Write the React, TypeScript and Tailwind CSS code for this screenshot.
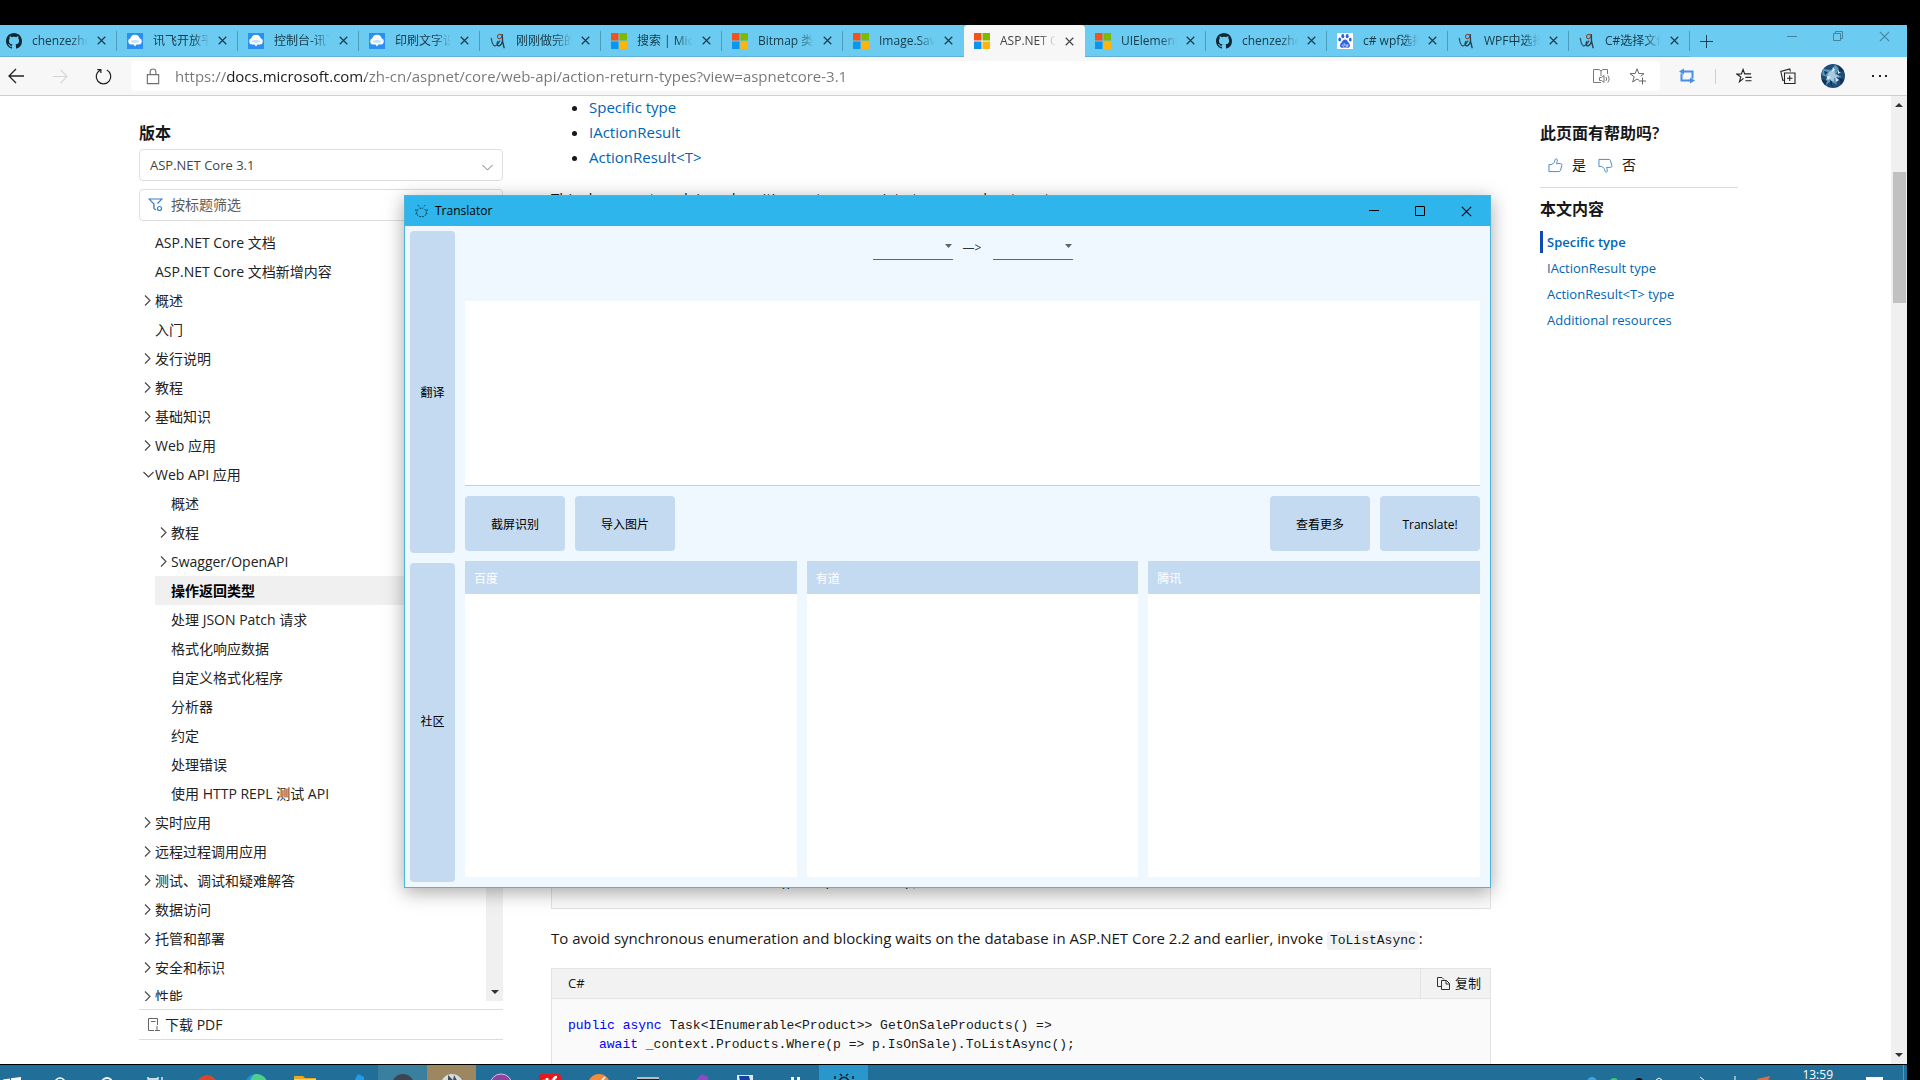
import React from "react";

type Favicon = "github" | "cloud" | "csdn" | "ms" | "baidu";

const TABS: { icon: Favicon; title: string; active?: boolean }[] = [
  { icon: "github", title: "chenzezhe" },
  { icon: "cloud", title: "讯飞开放平" },
  { icon: "cloud", title: "控制台-讯飞" },
  { icon: "cloud", title: "印刷文字识" },
  { icon: "csdn", title: "刚刚做完的" },
  { icon: "ms", title: "搜索 | Micr" },
  { icon: "ms", title: "Bitmap 类" },
  { icon: "ms", title: "Image.Sav" },
  { icon: "ms", title: "ASP.NET C", active: true },
  { icon: "ms", title: "UIElement" },
  { icon: "github", title: "chenzezhe" },
  { icon: "baidu", title: "c# wpf选择" },
  { icon: "csdn", title: "WPF中选择" },
  { icon: "csdn", title: "C#选择文件" },
];

type Node = { label: string; level: 1 | 2; mark?: "closed" | "open"; current?: boolean };

const TOC: Node[] = [
  { label: "ASP.NET Core 文档", level: 1 },
  { label: "ASP.NET Core 文档新增内容", level: 1 },
  { label: "概述", level: 1, mark: "closed" },
  { label: "入门", level: 1 },
  { label: "发行说明", level: 1, mark: "closed" },
  { label: "教程", level: 1, mark: "closed" },
  { label: "基础知识", level: 1, mark: "closed" },
  { label: "Web 应用", level: 1, mark: "closed" },
  { label: "Web API 应用", level: 1, mark: "open" },
  { label: "概述", level: 2 },
  { label: "教程", level: 2, mark: "closed" },
  { label: "Swagger/OpenAPI", level: 2, mark: "closed" },
  { label: "操作返回类型", level: 2, current: true },
  { label: "处理 JSON Patch 请求", level: 2 },
  { label: "格式化响应数据", level: 2 },
  { label: "自定义格式化程序", level: 2 },
  { label: "分析器", level: 2 },
  { label: "约定", level: 2 },
  { label: "处理错误", level: 2 },
  { label: "使用 HTTP REPL 测试 API", level: 2 },
  { label: "实时应用", level: 1, mark: "closed" },
  { label: "远程过程调用应用", level: 1, mark: "closed" },
  { label: "测试、调试和疑难解答", level: 1, mark: "closed" },
  { label: "数据访问", level: 1, mark: "closed" },
  { label: "托管和部署", level: 1, mark: "closed" },
  { label: "安全和标识", level: 1, mark: "closed" },
  { label: "性能", level: 1, mark: "closed" },
];

function Fav({ icon }: { icon: Favicon }) {
  if (icon === "github")
    return (
      <svg viewBox="0 0 16 16" className="size-4 shrink-0 fill-[#0d2733]">
        <path d="M8 0C3.58 0 0 3.58 0 8c0 3.54 2.29 6.53 5.47 7.59.4.07.55-.17.55-.38 0-.19-.01-.82-.01-1.49-2.01.37-2.53-.49-2.69-.94-.09-.23-.48-.94-.82-1.13-.28-.15-.68-.52-.01-.53.63-.01 1.08.58 1.23.82.72 1.21 1.87.87 2.33.66.07-.52.28-.87.51-1.07-1.78-.2-3.64-.89-3.64-3.95 0-.87.31-1.59.82-2.15-.08-.2-.36-1.02.08-2.12 0 0 .67-.21 2.2.82.64-.18 1.32-.27 2-.27s1.36.09 2 .27c1.53-1.04 2.2-.82 2.2-.82.44 1.1.16 1.92.08 2.12.51.56.82 1.27.82 2.15 0 3.07-1.87 3.75-3.65 3.95.29.25.54.73.54 1.48 0 1.07-.01 1.93-.01 2.2 0 .21.15.46.55.38A8.01 8.01 0 0 0 16 8c0-4.42-3.58-8-8-8z" />
      </svg>
    );
  if (icon === "cloud")
    return (
      <svg viewBox="0 0 16 16" className="size-4 shrink-0">
        <rect width="16" height="16" fill="#2b8ff0" />
        <path d="M4 11.600a3.300 3.300 0 0 1-.6-6.400 4.800 4.800 0 0 1 9.200 0 3.300 3.300 0 0 1-.6 6.400H9.500L8 13.600l-1.500-2z" fill="#fff" />
        <path d="M5 7.500v1.800M7 7v2.800M9 7v2.800M11 7.500v1.800" stroke="#6bb2f5" strokeWidth=".8" />
      </svg>
    );
  if (icon === "csdn")
    return (
      <svg viewBox="0 0 16 16" className="size-4 shrink-0" fill="none" strokeLinecap="round">
        <path d="M1.300 5.300c.4 3.600 1.500 6.700 3.300 7.700 2-.4 3.800-2.400 5.200-5" stroke="#31576b" strokeWidth="1.300" />
        <path d="M12 2.200C9.500.4 6.800 2 7.600 4.400c.8 2.200 4.200 1 4.600-1.400" stroke="#8a4a40" strokeWidth="1.200" />
        <path d="M12.300 1.700c-.3 4.300.4 9 1.800 13M8 8.500c-1.400 2-1 5 1.200 4.300 1.700-.6 2.900-2.400 3.300-4.600" stroke="#26434f" strokeWidth="1.400" />
      </svg>
    );
  if (icon === "ms")
    return (
      <svg viewBox="0 0 16 16" className="size-4 shrink-0">
        <path d="M0 0h7.500v7.500H0z" fill="#f2531b" />
        <path d="M8.500 0H16v7.500H8.500z" fill="#7eb900" />
        <path d="M0 8.500h7.500V16H0z" fill="#0a95ef" />
        <path d="M8.500 8.500H16V16H8.500z" fill="#fdb50c" />
      </svg>
    );
  return (
    <svg viewBox="0 0 16 16" className="size-4 shrink-0">
      <rect width="16" height="16" fill="#fff" />
      <g fill="#2f63de">
        <ellipse cx="5.800" cy="3.200" rx="1.500" ry="2.100" />
        <ellipse cx="10.200" cy="3.200" rx="1.500" ry="2.100" />
        <ellipse cx="2.700" cy="6.500" rx="1.400" ry="1.900" />
        <ellipse cx="13.300" cy="6.700" rx="1.400" ry="1.900" />
        <path d="M8 6.600c2 0 2.300 1.900 3.700 3.100 1.900 1.700 1.700 5-1.200 5.100-1 0-1.600-.2-2.500-.2s-1.500.2-2.500.2c-2.900-.1-3.100-3.400-1.200-5.100C5.700 8.500 6 6.600 8 6.600z" />
      </g>
      <path d="M5.600 11.500a1 1 0 1 0 1.600 1.400v-3M9 11v2.300h1.800V11" fill="none" stroke="#fff" strokeWidth=".7" />
    </svg>
  );
}

function Cross({ className }: { className: string }) {
  return (
    <svg viewBox="0 0 10 10" className={className} fill="none" stroke="currentColor">
      <path d="M.8.8l8.400 8.400M9.200.8L.8 9.200" />
    </svg>
  );
}

function TabStrip() {
  return (
    <div className="flex h-8 shrink-0 items-stretch justify-between overflow-hidden bg-[#6bcbf0] text-[#173a49]">
      <div role="tablist" className="-ml-1 flex">
        {TABS.map((t, i) => (
          <div
            key={i}
            role="tab"
            aria-selected={!!t.active}
            className={
              t.active
                ? "flex w-[121px] items-center rounded-t bg-[#f7f7f7] pl-[10px] text-[#444]"
                : "flex w-[121px] items-center border-b border-[#5fb1d3] pl-[10px]"
            }
          >
            <Fav icon={t.icon} />
            <span className="ml-[10px] w-[56px] overflow-hidden text-xs whitespace-nowrap [mask-image:linear-gradient(to_right,black_70%,transparent)]">
              {t.title}
            </span>
            <button aria-label="关闭标签页" className="ml-[5px] grid size-4 place-items-center">
              <Cross className="size-[9px] stroke-[1.300]" />
            </button>
            <i className={t.active || i === 7 ? "ml-auto" : "ml-auto h-5 w-px bg-[#4a9cbd]"} />
          </div>
        ))}
        <button aria-label="新建标签页" className="ml-1 grid w-6 place-items-center">
          <svg viewBox="0 0 14 14" className="size-[13px]" fill="none" stroke="currentColor">
            <path d="M7 0v14M0 7h14" />
          </svg>
        </button>
      </div>
      <div className="flex h-[22px] text-[#44849f]">
        <button aria-label="最小化" className="grid w-[46px] place-items-center">
          <svg viewBox="0 0 10 10" className="size-[10px]" stroke="currentColor">
            <path d="M0 5.500h10" />
          </svg>
        </button>
        <button aria-label="还原" className="grid w-[46px] place-items-center">
          <svg viewBox="0 0 10 10" className="size-[10px]" fill="none" stroke="currentColor">
            <path d="M.5 2.500h7v7h-7zM2.500 2.500v-2h7v7h-2" />
          </svg>
        </button>
        <button aria-label="关闭" className="grid w-[46px] place-items-center">
          <Cross className="size-[11px]" />
        </button>
      </div>
    </div>
  );
}

function Toolbar() {
  return (
    <div className="flex h-[39px] shrink-0 items-center border-b border-[#cfcfcf] bg-[#f7f7f7] text-[#222]">
      <div className="flex flex-none">
        <button aria-label="返回" className="grid w-8 place-items-center">
          <svg viewBox="0 0 16 16" className="size-4" fill="none" stroke="currentColor" strokeWidth="1.300">
            <path d="M16 8H1M8 1L1 8l7 7" />
          </svg>
        </button>
        <button aria-label="前进" className="ml-3 grid w-8 place-items-center text-[#d5d5d5]">
          <svg viewBox="0 0 16 16" className="size-[15px]" fill="none" stroke="currentColor" strokeWidth="1.200">
            <path d="M0 8h15M8 1l7 7-7 7" />
          </svg>
        </button>
        <button aria-label="刷新" className="ml-[11px] grid w-8 place-items-center">
          <svg viewBox="0 0 18 18" className="size-[17px]" fill="none" stroke="currentColor" strokeWidth="1.300">
            <path d="M12.500 2.200a7.700 7.700 0 1 1-7.200.1M2.500 1.700h3.700v3.700" />
          </svg>
        </button>
      </div>
      <div className="ml-3 flex h-[30px] flex-1 items-center rounded bg-white pr-[5px] pl-[14px]">
        <svg viewBox="0 0 16 18" className="h-[17px] w-4 text-[#707070]" fill="none" stroke="currentColor" strokeWidth="1.200">
          <path d="M2 7h12v9.500H2zM5 7V4a3 3 0 0 1 6 0v3" />
        </svg>
        <input
          aria-label="地址栏"
          readOnly
          value="https://docs.microsoft.com/zh-cn/aspnet/core/web-api/action-return-types?view=aspnetcore-3.1"
          className="ml-[14px] min-w-0 flex-1 bg-[linear-gradient(to_right,#767676_52px,#1a1a1a_52px,#1a1a1a_190px,#767676_190px)] bg-clip-text text-[15px] text-transparent outline-none"
        />
        <button aria-label="大声朗读" className="grid w-9 place-items-center text-[#777]">
          <svg viewBox="0 0 17 17" className="size-[17px]" fill="none" stroke="currentColor">
            <path d="M8 14.500H.5V1.500H6l2 1.500 2-1.500h4.500V6M8 3v5M6.500 9.500h2L11 7.500v7L8.500 12.500h-2zM12.800 9c1 1.200 1 2.800 0 4M14.800 7.500c1.700 2 1.700 5 0 7" />
          </svg>
        </button>
        <button aria-label="添加到收藏夹" className="grid w-9 place-items-center text-[#666]">
          <svg viewBox="0 0 17 17" className="size-[17px]" fill="none" stroke="currentColor">
            <path d="M10 12.200L8 11l-4.300 3 1.500-5.300L1 5.700l5.200-.2L8 .8l1.800 4.700 5.200.2-3.300 2.600M13.500 9.500v7M10 13h7" />
          </svg>
        </button>
      </div>
      <div className="flex flex-none items-center">
        <button aria-label="扩展" className="ml-[19px] grid w-4 place-items-center text-[#4590e6]">
          <svg viewBox="0 0 16 16" className="size-4" fill="none" stroke="currentColor" strokeWidth="2">
            <path d="M2.500 5.500v7H10M13.500 10.500v-7H6" />
            <path d="M2.500 3.500h4M13.500 12.500h-4" />
            <path d="M5 .5L0 3.500l5 3zM11 9.500l5 3-5 3z" fill="currentColor" stroke="none" />
          </svg>
        </button>
        <i className="ml-5 h-[15px] w-px bg-[#d0d0d0]" />
        <button aria-label="收藏夹" className="ml-5 grid w-4 place-items-center">
          <svg viewBox="0 0 17 16" className="size-4" fill="none" stroke="currentColor" strokeWidth="1.200">
            <path d="M8 10.500l-4.300 3.500 1.400-5L1 6l4.800-.2L7.500 1l1.700 4.800H16M10 9.500h6.500M10 13h6.500" />
          </svg>
        </button>
        <button aria-label="集锦" className="ml-7 grid w-4 place-items-center">
          <svg viewBox="0 0 16 16" className="size-4" fill="none" stroke="currentColor" strokeWidth="1.100">
            <path d="M4.500 5h10.500v10.500H4.500zM9.700 7.500v5.500M7 10.200h5.500M4.500 12L2.800 12.300.8 3.500l9-2.600.6 2.600" />
          </svg>
        </button>
        <button aria-label="个人资料" className="ml-[25px] grid size-6 place-items-center overflow-hidden rounded-full">
          <svg viewBox="0 0 24 24" className="size-6">
            <rect width="24" height="24" fill="#1f4d76" />
            <path d="M2 5l8 1 4-5 5 4-4 5 6 3-7 1 2 7-6-4-5 4 1-8-5-2z" fill="#5b98bf" />
            <path d="M8 8l5-3 1 5 4 2-5 2-1 6-3-5-4 1z" fill="#a9cade" />
            <path d="M12 3l2 3-3 2zM6 12l4 1-3 3zM14 13l4 3-3 2zM17 6l3 2-3 2z" fill="#dbe9f1" />
            <path d="M0 15l6 2-2 5zM17 1l6 6-5 1zM18 14l5 1-3 6zM9 16l3 2-2 4zM3 7l4 1-3 3z" fill="#12304f" />
          </svg>
        </button>
        <button aria-label="设置及其他" className="mr-5 ml-[27px] flex w-[15px] justify-between">
          <i className="size-[2px] bg-current" />
          <i className="size-[2px] bg-current" />
          <i className="size-[2px] bg-current" />
        </button>
      </div>
    </div>
  );
}

function TreeMark({ mark }: { mark?: "closed" | "open" }) {
  return (
    <span className="flex w-3 shrink-0 items-center">
      {mark === "closed" && (
        <svg viewBox="0 0 7 11" className="ml-px h-[11px] w-[7px]" fill="none" stroke="#444" strokeWidth="1.100">
          <path d="M1 .5l5 5-5 5" />
        </svg>
      )}
      {mark === "open" && (
        <svg viewBox="0 0 11 7" className="h-[7px] w-[11px]" fill="none" stroke="#444" strokeWidth="1.100">
          <path d="M.5 1l5 5 5-5" />
        </svg>
      )}
    </span>
  );
}

function Sidebar() {
  return (
    <nav className="flex w-[364px] flex-none flex-col pt-[25px] text-sm text-[#222]">
      <label htmlFor="version" className="text-base leading-6 font-semibold text-[#171717]">
        版本
      </label>
      <div className="relative mt-1">
        <select
          id="version"
          className="block h-8 w-full appearance-none rounded-sm border border-[#dedede] bg-white px-[10px] text-[13px] text-[#444]"
        >
          <option>ASP.NET Core 3.1</option>
        </select>
        <svg viewBox="0 0 11 7" className="pointer-events-none absolute top-[15px] right-[10px] h-[7px] w-[11px]" fill="none" stroke="#777">
          <path d="M.5 1l5 5 5-5" />
        </svg>
      </div>
      <div className="mt-2 flex h-8 items-center rounded-sm border border-[#dedede] px-2">
        <svg viewBox="0 0 15 14" className="h-[14px] w-[15px]" fill="none" stroke="#3d7cc4" strokeWidth="1.200">
          <path d="M9.500 5.500L14 1H1l5 5v4.500L8 12M5.800 6v4.500" />
          <circle cx="11.500" cy="10.500" r="2" />
        </svg>
        <input aria-label="按标题筛选" placeholder="按标题筛选" className="ml-2 min-w-0 flex-1 bg-transparent outline-none placeholder:text-[#5c5c5c]" />
      </div>
      <div className="mt-[7px] flex h-[773px]">
        <ul className="min-w-0 flex-1 overflow-hidden">
          {TOC.map((n, i) => (
            <li key={i} className={n.level === 2 ? "pl-4" : ""}>
              <a
                href="#"
                aria-current={n.current ? "page" : undefined}
                className={
                  n.current
                    ? "flex h-[29px] items-center bg-[#f0f0f0] font-semibold text-black"
                    : "ml-1 flex h-[29px] items-center"
                }
              >
                {n.current ? <span className="w-4" /> : <TreeMark mark={n.mark} />}
                {n.label}
              </a>
            </li>
          ))}
        </ul>
        <div className="flex w-[17px] items-end justify-center bg-[#f0f0f0] pb-[7px]">
          <svg viewBox="0 0 8 4" className="h-1 w-2 fill-[#333]">
            <path d="M0 0h8L4 4z" />
          </svg>
        </div>
      </div>
      <a href="#" className="mt-2 flex h-[31px] items-center gap-[5px] border-y border-[#dcdcdc] pl-2">
        <svg viewBox="0 0 13 13" className="size-[13px]" fill="none" stroke="#666">
          <path d="M7 12.500H1.500V.5h9V7M4 3.500h4.500M10 8v4.500M8 12.500h5" />
        </svg>
        下载 PDF
      </a>
    </nav>
  );
}

function CodeKey({ children }: { children: React.ReactNode }) {
  return <span className="text-[#0101fd]">{children}</span>;
}

function Article() {
  return (
    <main className="ml-12 min-w-0 flex-1 text-[15px] leading-[25px] text-[#171717]">
      <ul className="-mt-px list-disc pl-[38px] text-[#0065b3] marker:text-[#171717]">
        <li><a href="#">Specific type</a></li>
        <li><a href="#">IActionResult</a></li>
        <li><a href="#">ActionResult&lt;T&gt;</a></li>
      </ul>
      <p className="mt-4">This document explains when it's most appropriate to use each return type.</p>
      <pre className="mt-4 flex h-[682px] flex-col justify-end border border-[#e3e3e3] bg-[#fafafa] px-4 pb-4 font-['Liberation_Mono',monospace] text-[13px] leading-[19px]">
        <code>{"    _context.Products.Where(p => p.IsOnSale);"}</code>
      </pre>
      <p className="mt-[17px] h-[25px] whitespace-nowrap">
        To avoid synchronous enumeration and blocking waits on the database in ASP.NET Core 2.2 and earlier, invoke{" "}
        <code className="rounded-sm bg-[#f2f2f2] px-[3px] py-[2px] font-['Liberation_Mono',monospace] text-[13px] leading-4">ToListAsync</code>:
      </p>
      <section className="mt-[17px] h-[200px] border border-[#e3e3e3] bg-[#fafafa]">
        <header className="flex h-[30px] items-stretch justify-between border-b border-[#e3e3e3] bg-[#f2f2f2] text-[13px]">
          <span className="flex items-center pl-4">C#</span>
          <button className="flex items-center gap-[5px] border-l border-[#e3e3e3] pr-[9px] pl-4">
            <svg viewBox="0 0 13 13" className="size-[13px]" fill="none" stroke="#333">
              <path d="M4 9.500H.5v-9H5L7 2.500M4.500 3.500h5l3 3v6h-8zM9 3.500V7h3.500" />
            </svg>
            复制
          </button>
        </header>
        <pre className="px-4 pt-[17px] font-['Liberation_Mono',monospace] text-[13px] leading-[19px]">
          <code className="block">
            <CodeKey>public</CodeKey> <CodeKey>async</CodeKey>
            <span>{" Task<IEnumerable<Product>> GetOnSaleProducts() =>"}</span>
          </code>
          <code className="block pl-[31px]">
            <CodeKey>await</CodeKey>
            <span>{" _context.Products.Where(p => p.IsOnSale).ToListAsync();"}</span>
          </code>
        </pre>
      </section>
    </main>
  );
}

function Thumb({ down }: { down?: boolean }) {
  return (
    <svg viewBox="0 0 16 16" className={down ? "size-[15px] -scale-y-100" : "size-[15px]"} fill="none" stroke="#3d86cc">
      <path d="M1 7h2.500C6 6.500 7 4 7.800 1.500c.3-1 2.200-.7 2.200.8 0 1.200-.6 2.500-1 3.700h4.500c1 0 1.600.8 1.300 1.800l-1.600 5.500c-.2.700-.7 1.200-1.500 1.200H1z" />
    </svg>
  );
}

function Aside() {
  return (
    <aside className="ml-[49px] w-[198px] flex-none pt-[25px] text-[#171717]">
      <h2 className="text-base leading-6 font-semibold whitespace-nowrap">此页面有帮助吗?</h2>
      <div className="mt-2 flex h-6 items-center gap-3 pl-2 text-sm">
        <button className="flex items-center gap-[9px]"><Thumb />是</button>
        <button className="flex items-center gap-[9px]"><Thumb down />否</button>
      </div>
      <h2 className="mt-[10px] border-t border-[#dcdcdc] pt-[9px] text-base leading-6 font-semibold">本文内容</h2>
      <ul className="mt-[10px] text-[13px] leading-[22px] text-[#0065b3]">
        <li className="border-l-[3px] border-[#0f4bb0] pl-1 font-semibold"><a href="#">Specific type</a></li>
        <li className="mt-1 pl-[7px]"><a href="#">IActionResult type</a></li>
        <li className="mt-1 pl-[7px]"><a href="#">ActionResult&lt;T&gt; type</a></li>
        <li className="mt-1 pl-[7px]"><a href="#">Additional resources</a></li>
      </ul>
    </aside>
  );
}

function PageScrollbar() {
  return (
    <div className="flex w-4 flex-none flex-col items-center bg-[#f0f0f0] py-[7px]">
      <svg viewBox="0 0 8 4" className="h-1 w-2 fill-[#333]"><path d="M0 4h8L4 0z" /></svg>
      <i className="mt-[65px] h-[131px] w-[13px] bg-[#c1c1c1]" />
      <svg viewBox="0 0 8 4" className="mt-auto h-1 w-2 fill-[#333]"><path d="M0 0h8L4 4z" /></svg>
    </div>
  );
}

function LangSelect({ label }: { label: string }) {
  return (
    <div className="relative h-6 w-20 border-b border-[#5c6670]">
      <select aria-label={label} className="size-full appearance-none bg-transparent">
        <option></option>
      </select>
      <svg viewBox="0 0 7 4" className="pointer-events-none absolute top-2 right-px h-1 w-[7px] fill-[#5c6670]">
        <path d="M0 0h7L3.500 4z" />
      </svg>
    </div>
  );
}

function ActionButton({ children }: { children: React.ReactNode }) {
  return <button className="h-[55px] w-[100px] rounded bg-[#c3daf0] pt-[2px]">{children}</button>;
}

function TranslatorWindow() {
  return (
    <div className="absolute top-[195px] left-[404px] flex h-[693px] w-[1087px] flex-col border border-[#4db4dd] bg-[#eff7ff] text-xs text-black shadow-[0_4px_18px_rgba(0,0,0,0.35)]">
      <header className="flex h-[30px] shrink-0 items-center bg-[#2eb5ec]">
        <svg viewBox="0 0 14 14" className="ml-[10px] size-[13px]" fill="none" stroke="#0b3b50" strokeDasharray="2 1">
          <path d="M3 0l2 2.500M11 0L9 2.500M5 3.500h4M3.500 4.500C1 7 1.500 10 4 12.500M10.500 4.500c2.500 2.500 2 5.500-.5 8M4.500 12.500h5M1 4.500v2M13 4.500v2M.5 9.500l1.500-.5M13.500 9.500L12 9" />
        </svg>
        <h1 className="ml-[7px]">Translator</h1>
        <div className="mr-px ml-auto flex h-full">
          <button aria-label="最小化" className="grid w-[46px] place-items-center">
            <svg viewBox="0 0 10 10" className="size-[10px]" stroke="#000"><path d="M0 4.500h10" /></svg>
          </button>
          <button aria-label="最大化" className="grid w-[46px] place-items-center">
            <svg viewBox="0 0 10 10" className="size-[10px]" fill="none" stroke="#000"><path d="M.5.5h9v9h-9z" /></svg>
          </button>
          <button aria-label="关闭" className="grid w-[46px] place-items-center"><Cross className="size-[11px]" /></button>
        </div>
      </header>
      <div className="flex min-h-0 flex-1 gap-[10px] p-[5px]">
        <div className="flex w-[45px] flex-col gap-[10px]">
          <button className="flex-1 rounded bg-[#c3daf0] pt-[2px]">翻译</button>
          <button className="flex-1 rounded bg-[#c3daf0]">社区</button>
        </div>
        <div className="mr-[5px] flex min-w-0 flex-1 flex-col">
          <div className="flex h-[70px] justify-center gap-[10px] pt-[5px]">
            <LangSelect label="源语言" />
            <span className="flex h-6 w-5 items-center whitespace-nowrap text-[#333]">—&gt;</span>
            <LangSelect label="目标语言" />
          </div>
          <textarea aria-label="原文" className="h-[185px] w-full resize-none border-b border-[#b9d2e6] bg-white outline-none" />
          <div className="mt-[10px] flex gap-[10px]">
            <ActionButton>截屏识别</ActionButton>
            <ActionButton>导入图片</ActionButton>
            <span className="flex-1" />
            <ActionButton>查看更多</ActionButton>
            <ActionButton>Translate!</ActionButton>
          </div>
          <div className="mt-[10px] mb-[5px] grid flex-1 grid-cols-3 gap-[10px]">
            {["百度", "有道", "腾讯"].map((name) => (
              <section key={name} className="flex flex-col bg-white">
                <h2 className="flex h-[33px] items-center bg-[#c3daf0] pt-[2px] pl-[9px] text-white">{name}</h2>
              </section>
            ))}
          </div>
        </div>
      </div>
    </div>
  );
}

const APPS: { name: string; tile?: string; art: React.ReactNode }[] = [
  { name: "Office", art: <path d="M12 2a10 10 0 0 1 10 10v6H2v-6A10 10 0 0 1 12 2z" fill="#d9482b" /> },
  { name: "Edge", art: <><circle cx="12" cy="12" r="11" fill="#1b93d6" /><path d="M12 1c6 0 11 4 11 9l-8 2c0-5-6-6-9-3 1-4 3-8 6-8z" fill="#4fd08a" /></> },
  { name: "文件资源管理器", art: <><path d="M1 3h9l2 2h11v14H1z" fill="#e8a91c" /><path d="M1 6h22v5H1z" fill="#fbd45c" /><path d="M6 11h12v10H6z" fill="#4aa3e0" /></> },
  { name: "VS Code", art: <path d="M16 1l6 3v16l-6 3L2 11l3-2 5 3z" fill="#1f9cf0" /> },
  { name: "OBS", tile: "bg-[#3b7f9f]", art: <circle cx="12" cy="12" r="11" fill="#3c4650" /> },
  { name: "游戏", tile: "bg-[#9c8760]", art: <><circle cx="12" cy="12" r="11" fill="#d8dde2" /><path d="M8 2l5 5-5 5zM14 2l5 9-6-3z" fill="#454b57" /></> },
  { name: "IDE", art: <><circle cx="12" cy="12" r="11" fill="#8b459d" stroke="#ddb9e6" /><path d="M7 8h10v6H7z" fill="#e9d5ee" /></> },
  { name: "有道", art: <><rect x="1" y="1" width="22" height="22" rx="3" fill="#e3191c" /><path d="M5 8h7M9 5v12M19 4c-4 0-4 3-4 12M13 8h5" stroke="#fff" strokeWidth="2.500" fill="none" /></> },
  { name: "Postman", art: <><circle cx="12" cy="12" r="11" fill="#f58a3c" /><path d="M8 15L18 4" stroke="#fff" strokeWidth="1.500" /></> },
  { name: "终端", art: <><path d="M1 4h22v18H1z" fill="#222" /><path d="M1 4h22v2H1z" fill="#b9bdc0" /></> },
  { name: "Visual Studio", art: <><path d="M17 1l6 3v16l-6 3L6 12z" fill="#8a4bc6" /><path d="M2 7l9 7-9 6z" fill="#5d2d91" /></> },
  { name: "远程桌面", art: <><path d="M3 2h16v18H3z" fill="#dfe8f0" /><path d="M5 3h10l4 16H8z" fill="#1440a8" /></> },
  { name: "工具", art: <path d="M8 4h3v4h3V4h3v9l-3 8h-3l-3-8z" fill="#fff" /> },
  { name: "Translator", tile: "bg-[#2997cb]", art: <path d="M3 3v3M21 3v3M8 1l2 2M16 1l-2 2M6 14c0-13 12-13 12 0M9 12c1-5 5-5 6 0" stroke="#14222b" strokeWidth="1.500" fill="none" /> },
];

function Taskbar() {
  return (
    <footer className="h-4 shrink-0 overflow-hidden border-t border-black bg-[#216e98] text-xs text-white">
      <div className="flex h-10">
        <div className="flex h-10 flex-none items-start gap-[31px] pt-3 pr-[18px] pl-[3px]">
          <button aria-label="开始"><svg viewBox="0 0 18 18" className="size-[18px] fill-white"><path d="M0 2.500l7-1v6H0zM8 1.300L18 0v8H8z" /></svg></button>
          <button aria-label="搜索"><svg viewBox="0 0 16 16" className="size-4" fill="none" stroke="#fff" strokeWidth="1.500"><circle cx="8" cy="6" r="5" /></svg></button>
          <button aria-label="Cortana"><svg viewBox="0 0 16 16" className="size-4" fill="none" stroke="#fff" strokeWidth="2"><circle cx="8" cy="6" r="5" /></svg></button>
          <button aria-label="任务视图"><svg viewBox="0 0 18 18" className="size-[18px]" fill="none" stroke="#fff" strokeWidth="1.300"><path d="M2 0v2h10V0M16 0v18M1 5h12v6H1z" /></svg></button>
        </div>
        {APPS.map((a) => (
          <button key={a.name} aria-label={a.name} className={`flex h-10 w-[49px] justify-center pt-2 ${a.tile ?? ""}`}>
            <svg viewBox="0 0 24 24" className="size-6">{a.art}</svg>
          </button>
        ))}
        <div className="ml-auto flex pr-[3px]">
          <svg viewBox="0 0 200 16" className="h-4 w-[200px]" fill="none">
            <circle cx="10" cy="17" r="5" fill="#3fa2e0" />
            <circle cx="32" cy="17" r="4" fill="#3ccf6a" />
            <circle cx="57" cy="17" r="4" fill="#111" />
            <path d="M74 15l3-2 3 2M118 12l5 4M153 11v5" stroke="#fff" />
            <path d="M175 14l13-3-2 5h-10z" fill="#d8714a" />
          </svg>
          <time className="ml-[20px] leading-5">13:59</time>
          <button aria-label="通知" className="mt-3 ml-[33px] h-4 w-[17px] bg-white" />
          <i className="ml-5 w-px bg-[#5d98b7]" />
        </div>
      </div>
    </footer>
  );
}

export default function App() {
  return (
    <div className="relative flex h-screen flex-col overflow-hidden bg-black pt-[25px] pr-[13px] font-['Open_Sans','Noto_Sans_CJK_SC',sans-serif]">
      <TabStrip />
      <Toolbar />
      <div className="flex min-h-0 flex-1 overflow-hidden bg-white">
        <div className="flex min-w-0 flex-1 overflow-hidden pr-[153px] pl-[139px]">
          <Sidebar />
          <Article />
          <Aside />
        </div>
        <PageScrollbar />
      </div>
      <Taskbar />
      <TranslatorWindow />
    </div>
  );
}
